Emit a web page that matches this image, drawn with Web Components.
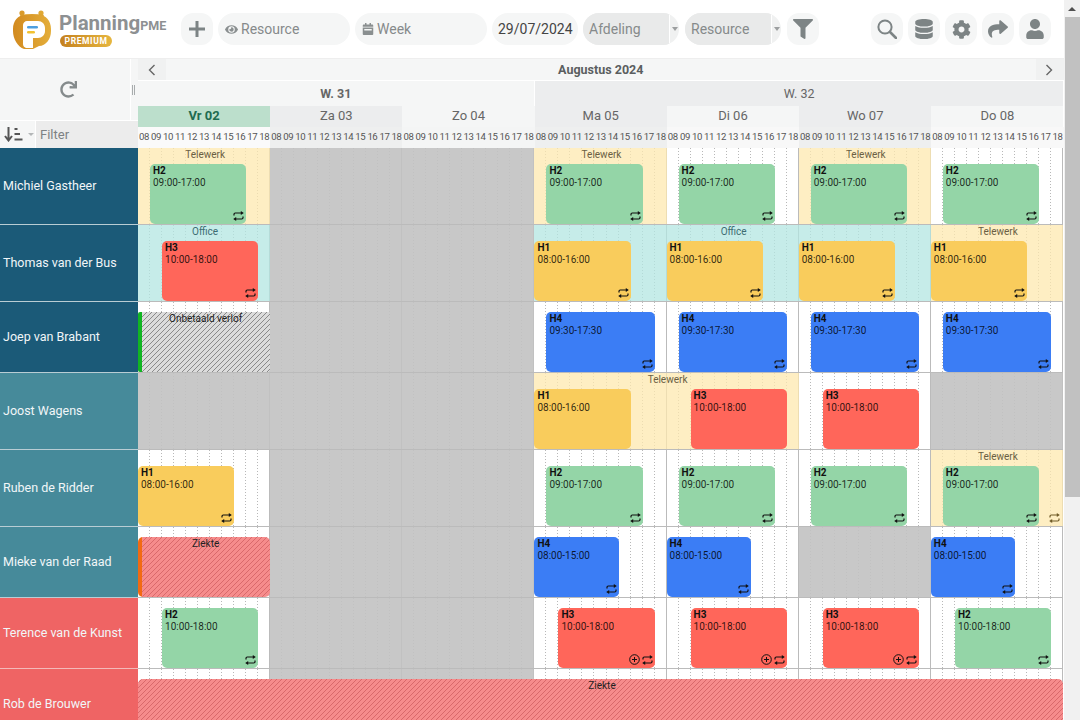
<!DOCTYPE html>
<html lang="nl">
<head>
<meta charset="utf-8">
<title>PlanningPME</title>
<style>
  html, body { margin: 0; height: 720px; overflow: hidden; background: #fff; }
  body { display: flex; font-family: Roboto, "Liberation Sans", sans-serif; }
  pme-app { flex: 1; min-width: 0; }
</style>
</head>
<body>
<pme-app>
  <pme-toolbar slot="toolbar">
    <pme-logo></pme-logo>
    <pme-button icon="plus"></pme-button>
    <pme-field icon="eye">Resource</pme-field>
    <pme-field icon="calendar">Week</pme-field>
    <pme-field kind="date">29/07/2024</pme-field>
    <pme-select>Afdeling</pme-select>
    <pme-select style="margin-left:1px">Resource</pme-select>
    <pme-button icon="filter" style="margin-left:1px"></pme-button>
    <pme-button slot="end" icon="search"></pme-button>
    <pme-button slot="end" icon="database"></pme-button>
    <pme-button slot="end" icon="cog"></pme-button>
    <pme-button slot="end" icon="share"></pme-button>
    <pme-button slot="end" icon="user"></pme-button>
  </pme-toolbar>
  <pme-corner slot="corner"></pme-corner>
  <pme-timeline-head slot="head"></pme-timeline-head>

  <pme-row name="Michiel Gastheer" tone="navy">
    <pme-band day="0" days="1" kind="tele">Telewerk</pme-band>
    <pme-band day="1" days="2" kind="off"></pme-band>
    <pme-band day="3" days="1" kind="tele">Telewerk</pme-band>
    <pme-band day="5" days="1" kind="tele">Telewerk</pme-band>
    <pme-event day="0" from="1" span="8" kind="h2" code="H2" time="09:00-17:00"></pme-event>
    <pme-event day="3" from="1" span="8" kind="h2" code="H2" time="09:00-17:00"></pme-event>
    <pme-event day="4" from="1" span="8" kind="h2" code="H2" time="09:00-17:00"></pme-event>
    <pme-event day="5" from="1" span="8" kind="h2" code="H2" time="09:00-17:00"></pme-event>
    <pme-event day="6" from="1" span="8" kind="h2" code="H2" time="09:00-17:00"></pme-event>
  </pme-row>
  <pme-row name="Thomas van der Bus" tone="navy">
    <pme-band day="0" days="1" kind="office">Office</pme-band>
    <pme-band day="1" days="2" kind="off"></pme-band>
    <pme-band day="3" days="3" kind="office">Office</pme-band>
    <pme-band day="6" days="1" kind="tele">Telewerk</pme-band>
    <pme-event day="0" from="2" span="8" kind="h3" code="H3" time="10:00-18:00"></pme-event>
    <pme-event day="3" from="0" span="8" kind="h1" code="H1" time="08:00-16:00"></pme-event>
    <pme-event day="4" from="0" span="8" kind="h1" code="H1" time="08:00-16:00"></pme-event>
    <pme-event day="5" from="0" span="8" kind="h1" code="H1" time="08:00-16:00"></pme-event>
    <pme-event day="6" from="0" span="8" kind="h1" code="H1" time="08:00-16:00"></pme-event>
  </pme-row>
  <pme-row name="Joep van Brabant" tone="navy" compact>
    <pme-band day="1" days="2" kind="off"></pme-band>
    <pme-absence day="0" days="1" kind="unpaid">Onbetaald verlof</pme-absence>
    <pme-event day="3" from="1" span="9" kind="h4" code="H4" time="09:30-17:30"></pme-event>
    <pme-event day="4" from="1" span="9" kind="h4" code="H4" time="09:30-17:30"></pme-event>
    <pme-event day="5" from="1" span="9" kind="h4" code="H4" time="09:30-17:30"></pme-event>
    <pme-event day="6" from="1" span="9" kind="h4" code="H4" time="09:30-17:30"></pme-event>
  </pme-row>
  <pme-row name="Joost Wagens" tone="teal">
    <pme-band day="0" days="3" kind="off"></pme-band>
    <pme-band day="3" days="2" kind="tele">Telewerk</pme-band>
    <pme-band day="6" days="1" kind="off"></pme-band>
    <pme-event day="3" from="0" span="8" kind="h1" code="H1" time="08:00-16:00" plain></pme-event>
    <pme-event day="4" from="2" span="8" kind="h3" code="H3" time="10:00-18:00" plain></pme-event>
    <pme-event day="5" from="2" span="8" kind="h3" code="H3" time="10:00-18:00" plain></pme-event>
  </pme-row>
  <pme-row name="Ruben de Ridder" tone="teal">
    <pme-band day="1" days="2" kind="off"></pme-band>
    <pme-band day="6" days="1" kind="tele" repeat>Telewerk</pme-band>
    <pme-event day="0" from="0" span="8" kind="h1" code="H1" time="08:00-16:00"></pme-event>
    <pme-event day="3" from="1" span="8" kind="h2" code="H2" time="09:00-17:00"></pme-event>
    <pme-event day="4" from="1" span="8" kind="h2" code="H2" time="09:00-17:00"></pme-event>
    <pme-event day="5" from="1" span="8" kind="h2" code="H2" time="09:00-17:00"></pme-event>
    <pme-event day="6" from="1" span="8" kind="h2" code="H2" time="09:00-17:00"></pme-event>
  </pme-row>
  <pme-row name="Mieke van der Raad" tone="teal" compact>
    <pme-band day="1" days="2" kind="off"></pme-band>
    <pme-band day="5" days="1" kind="off"></pme-band>
    <pme-absence day="0" days="1" kind="sick" stripe>Ziekte</pme-absence>
    <pme-event day="3" from="0" span="7" kind="h4" code="H4" time="08:00-15:00"></pme-event>
    <pme-event day="4" from="0" span="7" kind="h4" code="H4" time="08:00-15:00"></pme-event>
    <pme-event day="6" from="0" span="7" kind="h4" code="H4" time="08:00-15:00"></pme-event>
  </pme-row>
  <pme-row name="Terence van de Kunst" tone="red" compact>
    <pme-band day="1" days="2" kind="off"></pme-band>
    <pme-event day="0" from="2" span="8" kind="h2" code="H2" time="10:00-18:00"></pme-event>
    <pme-event day="3" from="2" span="8" kind="h3" code="H3" time="10:00-18:00" add></pme-event>
    <pme-event day="4" from="2" span="8" kind="h3" code="H3" time="10:00-18:00" add></pme-event>
    <pme-event day="5" from="2" span="8" kind="h3" code="H3" time="10:00-18:00" add></pme-event>
    <pme-event day="6" from="2" span="8" kind="h2" code="H2" time="10:00-18:00"></pme-event>
  </pme-row>
  <pme-row name="Rob de Brouwer" tone="red" compact>
    <pme-band day="1" days="2" kind="off"></pme-band>
    <pme-absence day="0" days="7" kind="sick">Ziekte</pme-absence>
  </pme-row>
</pme-app>
<pme-scrollbar></pme-scrollbar>

<script>
// font-awesome style glyphs, plain strokes for the small ones
const ICONS = {
  plus: '<svg width="18" height="18" viewBox="0 0 18 18"><path d="M9 1v16M1 9h16" stroke="#7d8485" stroke-width="3" fill="none"/></svg>',
  eye: '<svg width="13" height="13" viewBox="0 0 576 512"><path fill="#8a8f90" d="M572.52 241.4C518.29 135.59 410.93 64 288 64S57.68 135.64 3.48 241.41a32.35 32.35 0 0 0 0 29.19C57.71 376.41 165.07 448 288 448s230.32-71.64 284.52-177.41a32.35 32.35 0 0 0 0-29.19zM288 400a144 144 0 1 1 144-144 143.93 143.93 0 0 1-144 144zm0-240a95.31 95.31 0 0 0-25.31 3.79 47.85 47.85 0 0 1-66.9 66.9A95.78 95.78 0 1 0 288 160z"/></svg>',
  calendar: '<svg width="12" height="12" viewBox="0 0 448 512"><path fill="#8a8f90" d="M0 464c0 26.5 21.5 48 48 48h352c26.5 0 48-21.5 48-48V192H0v272zm64-192c0-8.8 7.2-16 16-16h288c8.8 0 16 7.2 16 16v32c0 8.8-7.2 16-16 16H80c-8.8 0-16-7.2-16-16v-32zM400 64h-48V16c0-8.8-7.2-16-16-16h-32c-8.8 0-16 7.2-16 16v48H160V16c0-8.8-7.2-16-16-16h-32c-8.8 0-16 7.2-16 16v48H48C21.5 64 0 85.5 0 112v48h448v-48c0-26.5-21.5-48-48-48z"/></svg>',
  filter: '<svg width="20" height="20" viewBox="0 0 512 512"><path fill="#7d8485" d="M487.976 0H24.028C2.71 0-8.047 25.866 7.058 40.971L192 225.941V432c0 7.831 3.821 15.17 10.237 19.662l80 55.98C298.02 518.69 320 507.493 320 487.98V225.941l184.947-184.97C520.021 25.896 509.338 0 487.976 0z"/></svg>',
  search: '<svg width="20" height="20" viewBox="0 0 20 20"><circle cx="8" cy="8" r="6.6" fill="none" stroke="#7d8485" stroke-width="2"/><path d="M13 13l6 6" stroke="#7d8485" stroke-width="2.6" stroke-linecap="round"/></svg>',
  database: '<svg width="18" height="20" viewBox="0 0 448 512"><path fill="#7d8485" d="M448 73.143v45.714C448 159.143 347.667 192 224 192S0 159.143 0 118.857V73.143C0 32.857 100.333 0 224 0s224 32.857 224 73.143zM448 176v102.857C448 319.143 347.667 352 224 352S0 319.143 0 278.857V176c48.125 33.143 136.208 48.572 224 48.572S399.874 209.143 448 176zm0 160v102.857C448 479.143 347.667 512 224 512S0 479.143 0 438.857V336c48.125 33.143 136.208 48.572 224 48.572S399.874 369.143 448 336z"/></svg>',
  cog: '<svg width="19" height="19" viewBox="0 0 512 512"><path fill="#7d8485" d="M487.4 315.7l-42.6-24.6c4.3-23.2 4.3-47 0-70.2l42.6-24.6c4.9-2.8 7.1-8.6 5.5-14-11.1-35.6-30-67.8-54.7-94.6-3.8-4.1-10-5.1-14.8-2.3L380.8 110c-17.9-15.4-38.5-27.3-60.8-35.1V25.8c0-5.6-3.9-10.5-9.4-11.7-36.7-8.2-74.3-7.8-109.2 0-5.5 1.2-9.4 6.1-9.4 11.7V75c-22.2 7.9-42.8 19.8-60.8 35.1L88.7 85.5c-4.9-2.8-11-1.9-14.8 2.3-24.7 26.7-43.6 58.9-54.7 94.6-1.7 5.4.6 11.2 5.5 14L67.3 221c-4.3 23.2-4.3 47 0 70.2l-42.6 24.6c-4.9 2.8-7.1 8.6-5.5 14 11.1 35.6 30 67.8 54.7 94.6 3.8 4.1 10 5.1 14.8 2.3l42.6-24.6c17.9 15.4 38.5 27.3 60.8 35.1v49.2c0 5.6 3.9 10.5 9.4 11.7 36.7 8.2 74.3 7.8 109.2 0 5.5-1.2 9.4-6.1 9.4-11.7v-49.2c22.2-7.9 42.8-19.8 60.8-35.1l42.6 24.6c4.9 2.8 11 1.9 14.8-2.3 24.7-26.7 43.6-58.9 54.7-94.6 1.5-5.5-.7-11.3-5.6-14.1zM256 336c-44.1 0-80-35.9-80-80s35.9-80 80-80 80 35.9 80 80-35.9 80-80 80z"/></svg>',
  share: '<svg width="20" height="20" viewBox="0 0 512 512"><path fill="#7d8485" d="M503.691 189.836L327.687 37.851C312.281 24.546 288 35.347 288 56.015v80.053C127.371 137.907 0 170.1 0 322.326c0 61.441 39.581 122.309 83.333 154.132 13.653 9.931 33.111-2.533 28.077-18.631C66.066 312.814 132.917 274.316 288 272.085V360c0 20.7 24.3 31.453 39.687 18.164l176.004-152c11.071-9.562 11.086-26.753 0-36.328z"/></svg>',
  user: '<svg width="18" height="20" viewBox="0 0 448 512"><path fill="#7d8485" d="M224 256c70.7 0 128-57.3 128-128S294.7 0 224 0 96 57.3 96 128s57.3 128 128 128zm89.6 32h-16.7c-22.2 10.2-46.9 16-72.9 16s-50.6-5.8-72.9-16h-16.7C60.2 288 0 348.2 0 422.4V464c0 26.5 21.5 48 48 48h352c26.5 0 48-21.5 48-48v-41.6c0-74.2-60.2-134.4-134.4-134.4z"/></svg>',
  redo: '<svg width="17" height="17" viewBox="0 0 512 512"><path fill="#858b8c" d="M500.33 0h-47.41a12 12 0 0 0-12 12.57l4 82.76A247.42 247.42 0 0 0 256 8C119.34 8 7.9 119.53 8 256.19 8.1 393.07 119.1 504 256 504a247.1 247.1 0 0 0 166.18-63.91 12 12 0 0 0 .48-17.43l-34-34a12 12 0 0 0-16.38-.55A176 176 0 1 1 402.1 157.8l-101.53-4.87a12 12 0 0 0-12.57 12v47.41a12 12 0 0 0 12 12h200.33a12 12 0 0 0 12-12V12a12 12 0 0 0-12-12z"/></svg>',
  repeat: '<svg width="11" height="10" viewBox="0 0 11 10"><path d="M1 4.6V3.2C1 2.4 1.5 2 2.3 2H8.6M10 5.4v1.4C10 7.6 9.5 8 8.7 8H2.4" fill="none" stroke="currentColor" stroke-width="1.2"/><path d="M7.8 0l3 2-3 2zM3.2 6l-3 2 3 2z" fill="currentColor"/></svg>',
  addCircle: '<svg width="11" height="11" viewBox="0 0 11 11"><circle cx="5.5" cy="5.5" r="4.8" fill="none" stroke="currentColor"/><path d="M5.5 3v5M3 5.5h5" stroke="currentColor"/></svg>'
};

const HOURS = ['08','09','10','11','12','13','14','15','16','17','18'];

// place an item on the 77 hour columns of a row
function placeOnGrid(el) {
  const day = +el.getAttribute('day') || 0;
  const from = +el.getAttribute('from') || 0;
  const span = el.hasAttribute('span') ? +el.getAttribute('span') : (+el.getAttribute('days') || 1) * 11;
  el.style.gridColumn = (day * 11 + from + 1) + ' / span ' + span;
  el.style.gridRow = '1';
}

class PmeApp extends HTMLElement {
  connectedCallback() {
    this.attachShadow({ mode: 'open' });
    this.shadowRoot.innerHTML = `
      <style>
        :host { display: flex; flex-direction: column; height: 720px; overflow: hidden; }
        .head { display: flex; height: 89px; flex: none; }
        .rows { padding-right: 1px; }
      </style>
      <slot name="toolbar"></slot>
      <div class="head">
        <slot name="corner"></slot>
        <slot name="head"></slot>
      </div>
      <div class="rows"><slot></slot></div>
    `;
  }
}

class PmeToolbar extends HTMLElement {
  connectedCallback() {
    this.attachShadow({ mode: 'open' });
    this.shadowRoot.innerHTML = `
      <style>
        :host { display: flex; align-items: center; gap: 5px; height: 59px; flex: none; box-sizing: border-box;
                padding: 0 13px; border-bottom: 1px solid #eeeeee; }
        .end { margin-left: auto; display: flex; gap: 5px; }
      </style>
      <slot></slot>
      <div class="end"><slot name="end"></slot></div>
    `;
  }
}

class PmeLogo extends HTMLElement {
  connectedCallback() {
    this.attachShadow({ mode: 'open' });
    this.shadowRoot.innerHTML = `
      <style>
        :host { display: flex; width: 163px; height: 42px; gap: 8px; align-items: center; }
        .words { display: flex; flex-direction: column; align-items: flex-start; color: #8d9092; font-weight: 700; }
        .name { font-size: 20.5px; line-height: 22px; white-space: nowrap; }
        .name span { font-size: 12.5px; }
        .badge { margin-top: -2px; margin-left: 1px; width: 52px; height: 12px; border-radius: 6px; color: #fff; font-size: 8.5px; line-height: 12px;
                 letter-spacing: .6px; text-align: center; background: linear-gradient(90deg, #c5811f, #e6b63f); }
      </style>
      <svg width="38" height="40" viewBox="0 0 38 40">
        <defs><linearGradient id="g" x1="0" x2="1"><stop offset="0" stop-color="#d28a1f"/><stop offset="1" stop-color="#e4ae3a"/></linearGradient></defs>
        <circle cx="9" cy="4" r="2.6" fill="#d99a2a"/><circle cx="28" cy="4" r="2.6" fill="#e0a833"/>
        <path d="M7 6q12-2 24 0l-2 4H9z" fill="#dca02e"/>
        <path d="M12 6h14c7 0 12 6 12 14v2c0 8-5 15-12 15l-6 3h-9C5 38 0 30 0 22v-2C0 12 5 6 12 6z" fill="url(#g)"/>
        <path d="M14 12h11c4 0 7 3 7 7v3c0 4-3 7-7 7h-5v10h-7c-2-1-3-2-3-4V16c0-2 2-4 4-4z" fill="#fff"/>
        <rect x="14" y="17" width="11" height="2.6" rx="1.3" fill="#4d9fe0"/>
        <rect x="14" y="22" width="8" height="2.6" rx="1.3" fill="#f2c230"/>
      </svg>
      <div class="words">
        <div class="name">Planning<span>PME</span></div>
        <div class="badge">PREMIUM</div>
      </div>
    `;
  }
}

class PmeButton extends HTMLElement {
  connectedCallback() {
    this.attachShadow({ mode: 'open' });
    this.shadowRoot.innerHTML = `
      <style>
        :host { display: flex; align-items: center; justify-content: center; width: 32px; height: 32px;
                border-radius: 12px; background: #f5f6f6; }
        svg { display: block; }
      </style>
      ${ICONS[this.getAttribute('icon')]}
    `;
  }
}

class PmeField extends HTMLElement {
  connectedCallback() {
    this.attachShadow({ mode: 'open' });
    const icon = this.getAttribute('icon');
    this.shadowRoot.innerHTML = `
      <style>
        :host { display: flex; align-items: center; gap: 3px; width: 132px; height: 32px; box-sizing: border-box;
                padding: 0 7px; border-radius: 16px; background: #f5f6f6; color: #868a8b; font-size: 14px; }
        :host([kind="date"]) { width: 86px; padding: 0 6px; color: #444; white-space: nowrap; }
        svg { display: block; flex: none; }
      </style>
      ${icon ? ICONS[icon] : ''}<slot></slot>
    `;
  }
}

class PmeSelect extends HTMLElement {
  connectedCallback() {
    this.attachShadow({ mode: 'open' });
    this.shadowRoot.innerHTML = `
      <style>
        :host { display: flex; width: 96px; height: 32px; border-radius: 16px; overflow: hidden;
                color: #868a8b; font-size: 14px; background: #f0f1f1; }
        .value { flex: 1; display: flex; align-items: center; padding-left: 6px; background: #e9eaea; border-right: 1px solid #fff; }
        .caret { width: 9px; display: flex; align-items: center; justify-content: center; }
        .caret i { border: 3px solid transparent; border-top: 4px solid #9c9fa0; border-bottom: 0; }
      </style>
      <div class="value"><slot></slot></div>
      <div class="caret"><i></i></div>
    `;
  }
}

class PmeCorner extends HTMLElement {
  connectedCallback() {
    this.attachShadow({ mode: 'open' });
    this.shadowRoot.innerHTML = `
      <style>
        :host { display: flex; flex-direction: column; width: 138px; flex: none; background: #f5f6f6; }
        .top { flex: 1; display: flex; }
        .refresh { flex: 1; display: flex; align-items: center; justify-content: center; padding-left: 6px; border-right: 1px solid #fff; }
        .split { width: 5px; padding-right: 2px; display: flex; align-items: center; justify-content: center; gap: 1px; }
        .split i { width: 1px; height: 10px; background: #a8acad; }
        .bottom { display: flex; height: 27px; border-top: 1px solid #fff; }
        .sort { width: 36px; display: flex; align-items: center; gap: 5px; padding-left: 4px; box-sizing: border-box; border-right: 1px solid #fff; }
        .sort b { border: 3px solid transparent; border-top: 3px solid #b3b6b7; border-bottom: 0; }
        .filter { flex: 1; background: #ececec; color: #7d8284; font-size: 13px; line-height: 27px; padding-left: 4px; }
        svg { display: block; }
      </style>
      <div class="top">
        <div class="refresh">${ICONS.redo}</div>
        <div class="split"><i></i><i></i></div>
      </div>
      <div class="bottom">
        <div class="sort">
          <svg width="19" height="15" viewBox="0 0 19 15">
            <path d="M4.5 0v13M1 9l3.5 4.5L8 9" fill="none" stroke="#555" stroke-width="2"/>
            <path d="M10.5 2h3M10.5 7h5.5M10.5 12.5h8" stroke="#555" stroke-width="1.8"/>
          </svg>
          <b></b>
        </div>
        <div class="filter">Filter</div>
      </div>
    `;
  }
}

class PmeTimelineHead extends HTMLElement {
  connectedCallback() {
    this.attachShadow({ mode: 'open' });
    const days = [
      ['Vr 02', '#bcdfcc', '#fafafa'], ['Za 03', '#ecedee', '#eeefef'], ['Zo 04', '#f5f6f6', '#f4f5f5'],
      ['Ma 05', '#ecedee', '#eeefef'], ['Di 06', '#f5f6f6', '#f8f8f8'], ['Wo 07', '#ecedee', '#eeefef'], ['Do 08', '#f5f6f6', '#f8f8f8']
    ];
    const dayCells = days.map((d, i) =>
      `<div class="day${i === 0 ? ' today' : ''}" style="background:${d[1]}">${d[0]}</div>`).join('');
    const hourCells = days.map(d =>
      HOURS.map(h => `<span style="background:${d[2]}">${h}</span>`).join('')).join('');
    this.shadowRoot.innerHTML = `
      <style>
        :host { display: flex; flex-direction: column; flex: 1; min-width: 0; padding-right: .5px; color: #666; }
        .month { display: flex; height: 21px; align-items: stretch; background: #f5f6f6; border-bottom: 1px solid #fff; }
        .month div { flex: 1; text-align: center; font-size: 12.5px; font-weight: 700; line-height: 21px; color: #5a5e60; }
        .nav { width: 28px; background: #f0f1f1; display: flex; align-items: center; justify-content: center; }
        .nav.next svg { margin-right: 1px; }
        .weeks { display: grid; grid-template-columns: 3fr 4fr; height: 24px; border-bottom: 1px solid #fff; }
        .week { text-align: center; font-size: 12.5px; line-height: 25px; background: #f5f6f6; }
        .w31 { font-weight: 700; border-right: 1px solid #fff; }
        .w32 { background: #ecedee; }
        .days { display: grid; grid-template-columns: repeat(7, 1fr); height: 21px; }
        .day { text-align: center; font-size: 13px; line-height: 20px; }
        .today { color: #216b50; font-weight: 700; }
        .hours { display: grid; grid-template-columns: repeat(77, 1fr); height: 21px; }
        .hours span { font-size: 9.6px; letter-spacing: -.4px; line-height: 20px; text-align: center; color: #555; white-space: nowrap; }
        svg { display: block; }
      </style>
      <div class="month">
        <span class="nav"><svg width="8" height="12" viewBox="0 0 8 12"><path d="M6.5 1L1.5 6l5 5" fill="none" stroke="#666" stroke-width="1.4"/></svg></span>
        <div>Augustus 2024</div>
        <span class="nav next"><svg width="8" height="12" viewBox="0 0 8 12"><path d="M1.5 1l5 5-5 5" fill="none" stroke="#666" stroke-width="1.4"/></svg></span>
      </div>
      <div class="weeks"><div class="week w31">W. 31</div><div class="week w32">W. 32</div></div>
      <div class="days">${dayCells}</div>
      <div class="hours">${hourCells}</div>
    `;
  }
}

class PmeRow extends HTMLElement {
  connectedCallback() {
    this.attachShadow({ mode: 'open' });
    let hours = '';
    for (let i = 0; i < 77; i++) {
      hours += `<i class="${i % 11 === 10 ? 'end' : ''}" style="grid-column:${i + 1}"></i>`;
    }
    this.shadowRoot.innerHTML = `
      <style>
        :host { display: flex; height: 77px; --event-top: 16px; }
        :host([compact]) { height: 71px; --event-top: 10px; }
        .name { width: 138px; flex: none; box-sizing: border-box; display: flex; align-items: center; padding: 0 0 1px 3px;
                font-size: 12.5px; color: #f1f6f8; border-bottom: 1px solid #b9cdd4; white-space: nowrap; }
        :host([tone="navy"]) .name { background: #1b5a78; }
        :host([tone="teal"]) .name { background: #468a9a; }
        :host([tone="red"]) .name { background: #ef6464; border-bottom-color: #f3b9b9; }
        .grid { flex: 1; min-width: 0; display: grid; grid-template-columns: repeat(77, 1fr); grid-template-rows: 1fr;
                border-bottom: 1px solid #bbbbbb; }
        .grid i { grid-row: 1; background: linear-gradient(#b8b8b8 1px, transparent 1px) right top / 1px 3px repeat-y; }
        .grid i.end { background: linear-gradient(#bbb, #bbb) right top / 1px 100% no-repeat; }
      </style>
      <div class="name">${this.getAttribute('name')}</div>
      <div class="grid">${hours}<slot></slot></div>
    `;
  }
}

class PmeBand extends HTMLElement {
  connectedCallback() {
    this.attachShadow({ mode: 'open' });
    placeOnGrid(this);
    this.shadowRoot.innerHTML = `
      <style>
        :host { display: flex; flex-direction: column; min-width: 0; font-size: 10px; line-height: 12px; text-align: center; padding: 1px 0 0 2px; }
        :host([kind="tele"]) { background: rgba(254, 232, 175, .75); color: #6b5f43; }
        :host([kind="office"]) { background: rgba(179, 230, 226, .75); color: #3d6c72; }
        :host([kind="off"]) { background: rgba(194, 194, 194, .9); }
        .foot { margin-top: auto; display: flex; justify-content: flex-end; padding: 0 3px 3px 0; color: #6f5a26; }
      </style>
      <slot></slot>
      ${this.hasAttribute('repeat') ? `<div class="foot">${ICONS.repeat}</div>` : ''}
    `;
  }
}

class PmeAbsence extends HTMLElement {
  connectedCallback() {
    this.attachShadow({ mode: 'open' });
    placeOnGrid(this);
    const first = this.getAttribute('kind') === 'unpaid' ? 'linear-gradient(#11b522, #11b522) 0 0 / 4px 100% no-repeat,'
      : this.hasAttribute('stripe') ? 'linear-gradient(#f26a12, #f26a12) 0 0 / 4px 100% no-repeat,' : '';
    // 3.5355px across the stripes is exactly 5px along x, so no moire
    this.shadowRoot.innerHTML = `
      <style>
        :host { display: block; margin-top: var(--event-top); min-width: 0; padding: 1px 0 0 3px; font-size: 10px; line-height: 12px; text-align: center; color: #222; }
        :host([kind="unpaid"]) { border-radius: 2px; background: ${first} repeating-linear-gradient(135deg, #dcdcdc 0 2.6px, #8a8a8a 2.6px 3.5355px); }
        :host([kind="sick"]) { border-radius: 5px; background: ${first} repeating-linear-gradient(135deg, #f68c8c 0 2.6px, #d9696b 2.6px 3.5355px); }
      </style>
      <slot></slot>
    `;
  }
}

class PmeEvent extends HTMLElement {
  connectedCallback() {
    this.attachShadow({ mode: 'open' });
    placeOnGrid(this);
    const foot = (this.hasAttribute('add') ? ICONS.addCircle : '') + (this.hasAttribute('plain') ? '' : ICONS.repeat);
    this.shadowRoot.innerHTML = `
      <style>
        :host { display: flex; flex-direction: column; margin-top: var(--event-top); min-width: 0; box-sizing: border-box;
                padding: 1px 2px 3px 3px; border-radius: 5px; font-size: 10px; line-height: 12px; color: rgba(0, 0, 0, .82); white-space: nowrap; }
        :host([kind="h1"]) { background: #f9cc5c; }
        :host([kind="h2"]) { background: #94d5a7; }
        :host([kind="h3"]) { background: #ff665a; }
        :host([kind="h4"]) { background: #3b7df5; }
        b { font-weight: 700; color: #111; }
        .foot { margin-top: auto; display: flex; justify-content: flex-end; align-items: center; gap: 2px; color: #111; }
        svg { display: block; }
      </style>
      <b>${this.getAttribute('code')}</b>
      <span>${this.getAttribute('time')}</span>
      <div class="foot">${foot}</div>
    `;
  }
}

class PmeScrollbar extends HTMLElement {
  connectedCallback() {
    this.attachShadow({ mode: 'open' });
    this.shadowRoot.innerHTML = `
      <style>
        :host { display: flex; flex-direction: column; flex: none; width: 16px; height: 720px; background: #f1f1f1; }
        .arrow { height: 17px; display: flex; align-items: center; justify-content: center; flex: none; }
        .up { border: 4px solid transparent; border-bottom: 4px solid #505050; border-top: 0; }
        .thumb { height: 480px; flex: none; margin-left: 1px; background: #c1c1c1; }
      </style>
      <div class="arrow"><i class="up"></i></div>
      <div class="thumb"></div>
    `;
  }
}

customElements.define('pme-app', PmeApp);
customElements.define('pme-toolbar', PmeToolbar);
customElements.define('pme-logo', PmeLogo);
customElements.define('pme-button', PmeButton);
customElements.define('pme-field', PmeField);
customElements.define('pme-select', PmeSelect);
customElements.define('pme-corner', PmeCorner);
customElements.define('pme-timeline-head', PmeTimelineHead);
customElements.define('pme-row', PmeRow);
customElements.define('pme-band', PmeBand);
customElements.define('pme-absence', PmeAbsence);
customElements.define('pme-event', PmeEvent);
customElements.define('pme-scrollbar', PmeScrollbar);
</script>
</body>
</html>
